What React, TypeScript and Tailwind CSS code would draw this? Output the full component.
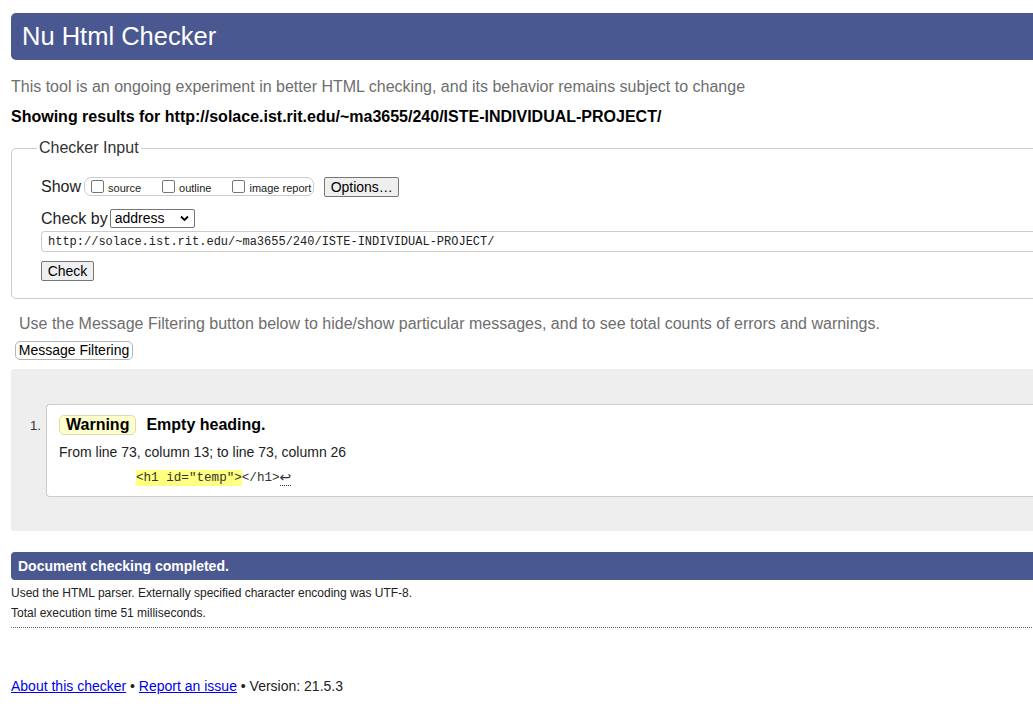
const Checkbox = ({ label }: { label: string }) => (
  <span className="flex items-center shrink-0 whitespace-nowrap mr-[21px] last:mr-0">
    <span className="inline-block w-[13px] h-[13px] border border-[#767676] rounded-[2px] bg-white mr-[4px]" />
    <span className="text-[11px] leading-[13px] text-[#222] pt-[3px]">{label}</span>
  </span>
);

const GreyButton = ({
  children,
  className = "",
}: {
  children: React.ReactNode;
  className?: string;
}) => (
  <button
    type="button"
    className={`border border-[#767676] bg-[#efefef] rounded-[2px] text-[14px] leading-[18px] text-black ${className}`}
  >
    {children}
  </button>
);

export default function App() {
  return (
    <div className="w-screen h-screen overflow-hidden bg-white text-[#222] font-['Liberation_Sans',Arial,sans-serif]">
      <div className="w-[1120px] pl-[11px]">
        {/* header */}
        <div className="mt-[13px] h-[47px] bg-[#4a5892] rounded-l-[5px] flex items-center pl-[11px]">
          <h1 className="text-white text-[25.5px] leading-none">Nu Html Checker</h1>
        </div>

        <p className="mt-[18px] h-[18px] leading-[18px] text-[16px] text-[#6e6e6e]">
          This tool is an ongoing experiment in better HTML checking, and its
          behavior remains subject to change
        </p>
        <p className="mt-[12px] h-[18px] leading-[18px] text-[16px] font-bold text-black">
          Showing results for
          http://solace.ist.rit.edu/~ma3655/240/ISTE-INDIVIDUAL-PROJECT/
        </p>

        {/* checker input */}
        <fieldset className="mt-[13px] border border-[#cccccc] rounded-[5px] pl-[29px] pb-[17px]">
          <legend className="-ml-[4px] px-[2px] text-[16px] leading-[18px] text-[#333]">
            Checker Input
          </legend>
          <div className="pt-[19px]">
            <div className="flex items-center h-[21px]">
              <span className="text-[16px] text-[#222] mr-[3px]">Show</span>
              <div className="flex items-center h-[19px] border border-[#cccccc] rounded-[7px] pl-[6px] pr-[2px]">
                <Checkbox label="source" />
                <Checkbox label="outline" />
                <Checkbox label="image report" />
              </div>
              <GreyButton className="ml-[10px] w-[75px] h-[20px]">Options…</GreyButton>
            </div>
            <div className="flex items-center h-[19px] mt-[12px]">
              <span className="text-[16px] text-[#222] mr-[2px]">Check by</span>
              <div className="relative w-[85px] h-[19px] border border-[#767676] rounded-[2px] bg-white flex items-center pl-[4px] text-[14px] text-black">
                address
                <svg
                  className="absolute right-[5px] top-[5px]"
                  width="9"
                  height="7"
                  viewBox="0 0 9 7"
                >
                  <path d="M1 1.5 L4.5 5 L8 1.5" stroke="#000" strokeWidth="1.8" fill="none" />
                </svg>
              </div>
            </div>
            <div className="mt-[3px] h-[21px] border border-[#cccccc] border-r-0 rounded-l-[4px] flex items-center pl-[6px] font-['Liberation_Mono',monospace] text-[12px] text-[#222]">
              http://solace.ist.rit.edu/~ma3655/240/ISTE-INDIVIDUAL-PROJECT/
            </div>
            <GreyButton className="mt-[9px] w-[53px] h-[20px] block">Check</GreyButton>
          </div>
        </fieldset>

        <p className="mt-[16px] ml-[8px] h-[18px] leading-[18px] text-[16px] text-[#6e6e6e]">
          Use the Message Filtering button below to hide/show particular
          messages, and to see total counts of errors and warnings.
        </p>
        <button
          type="button"
          className="block mt-[8px] ml-[4px] h-[19px] w-[118px] border border-[#b4b4b4] rounded-[5px] bg-white text-[14px] leading-[17px] text-black"
        >
          Message Filtering
        </button>

        {/* results */}
        <div className="mt-[9px] bg-[#eeeeee] rounded-l-[3px] pt-[35px] pb-[34px]">
          <div className="flex">
            <span className="w-[35px] pl-[19px] pt-[14px] text-[13px] leading-[16px] text-[#333]">1.</span>
            <div className="flex-1 bg-white border border-[#cccccc] border-r-0 rounded-l-[4px] h-[93px] pl-[12px] pt-[10px]">
              <div className="flex items-center h-[20px]">
                <span className="h-[20px] px-[6px] bg-[#ffffcc] border border-[#dcdcb4] rounded-[5px] text-[16px] leading-[18px] font-bold text-black">
                  Warning
                </span>
                <span className="ml-[10px] text-[16px] font-bold text-black">Empty heading.</span>
              </div>
              <p className="mt-[9px] h-[16px] leading-[16px] text-[14px] text-[#222]">
                From line 73, column 13; to line 73, column 26
              </p>
              <p className="mt-[10px] pl-[77px] h-[16px] leading-[16px] font-['Liberation_Mono',monospace] text-[12.6px] text-[#333] whitespace-pre flex items-center">
                <span className="bg-[#ffff80]">{'<h1 id="temp">'}</span>
                <span>{"</h1>"}</span>
                <span className="border-b border-dotted border-[#333] text-[14px] leading-[15px] font-['DejaVu_Sans',sans-serif]">↩</span>
              </p>
            </div>
          </div>
        </div>

        {/* completion */}
        <div className="mt-[21px] h-[28px] bg-[#4a5892] rounded-l-[4px] flex items-center pl-[7px]">
          <span className="text-white text-[14px] font-bold">Document checking completed.</span>
        </div>
        <p className="mt-[5px] h-[16px] leading-[16px] text-[12px] text-[#222]">
          Used the HTML parser. Externally specified character encoding was UTF-8.
        </p>
        <p className="mt-[4px] h-[16px] leading-[16px] text-[12px] text-[#222]">
          Total execution time 51 milliseconds.
        </p>
        <div className="mt-[6px] border-b border-dotted border-[#666]" />

        <p className="mt-[49px] h-[18px] leading-[18px] text-[14px] text-[#222]">
          <a href="#" className="text-[#0000ee] underline">About this checker</a>
          {" • "}
          <a href="#" className="text-[#0000ee] underline">Report an issue</a>
          {" • Version: 21.5.3"}
        </p>
      </div>
    </div>
  );
}
